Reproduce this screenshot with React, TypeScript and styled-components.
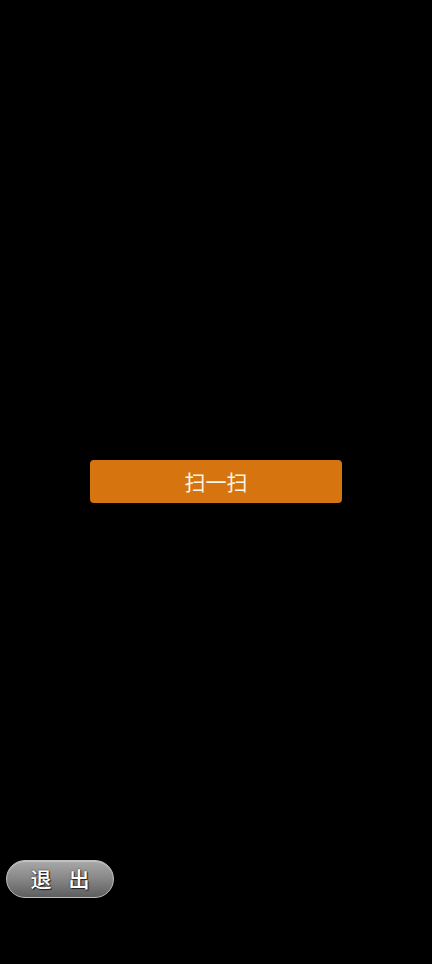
import React from 'react'
import styled, { createGlobalStyle } from 'styled-components'

const GlobalStyle = createGlobalStyle`
  html, body {
    margin: 0;
    padding: 0;
    background: #000;
  }
  body {
    font-family: "Noto Sans CJK SC", "Noto Sans", sans-serif;
  }
`

const Screen = styled.div`
  position: relative;
  width: 432px;
  height: 964px;
  background: #000;
  display: flex;
  flex-direction: column;
`

const Center = styled.div`
  flex: 1;
  display: flex;
  flex-direction: column;
  align-items: center;
  padding-top: 460px;
`

const ScanButton = styled.button`
  width: 252px;
  height: 43px;
  border: none;
  border-radius: 4px;
  background: #d6750f;
  color: #fdf6e6;
  font-family: "Noto Sans CJK SC", sans-serif;
  font-size: 21px;
  line-height: 43px;
  padding: 0;
  cursor: pointer;
`

const Footer = styled.div`
  padding: 0 0 66px 6px;
`

const ExitButton = styled.button`
  box-sizing: border-box;
  width: 108px;
  height: 38px;
  border-radius: 19px;
  border: 1px solid #bdbdbd;
  background: linear-gradient(180deg, #a8a8a8 0%, #8a8a8a 45%, #5e5e5e 100%);
  box-shadow: inset 0 1px 0 rgba(255, 255, 255, 0.35);
  color: #fff;
  font-family: "Noto Sans CJK SC", sans-serif;
  font-size: 21px;
  font-weight: 500;
  letter-spacing: 17px;
  text-indent: 17px;
  text-shadow: 1px 1px 1px #222, 0 0 2px #333;
  padding: 0 0 3px 0;
  display: flex;
  align-items: center;
  justify-content: center;
  cursor: pointer;
`

const App: React.FC = () => {
  return (
    <>
      <GlobalStyle />
      <Screen>
        <Center>
          <ScanButton>扫一扫</ScanButton>
        </Center>
        <Footer>
          <ExitButton>退出</ExitButton>
        </Footer>
      </Screen>
    </>
  )
}

export default App
